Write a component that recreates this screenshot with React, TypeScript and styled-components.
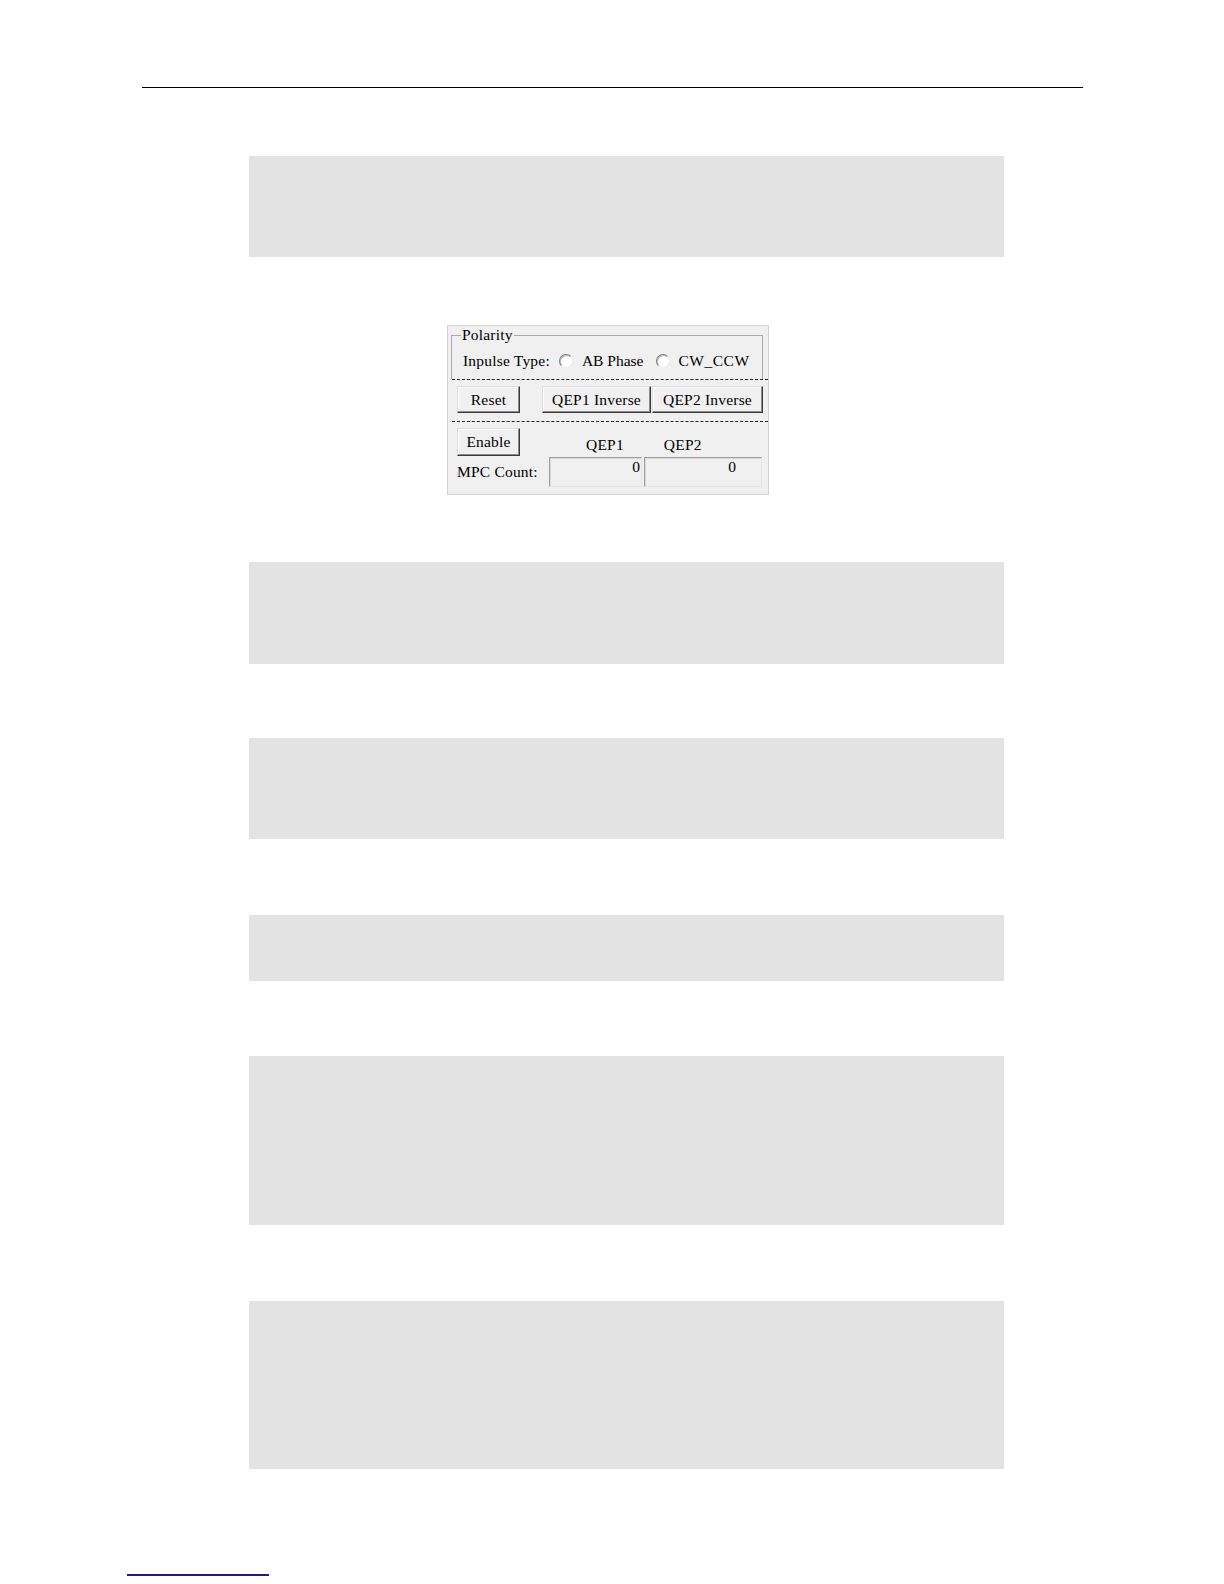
import React from "react";
import styled, { createGlobalStyle } from "styled-components";

const GlobalStyle = createGlobalStyle`
  html, body {
    margin: 0;
    padding: 0;
    background: #ffffff;
  }
  body {
    font-family: "Liberation Serif", "Times New Roman", serif;
    color: #000;
  }
`;

export default function App() {
  return (
    <>
      <GlobalStyle />
      <Page>
        <TopRule />
        <GreyBlock $top={68} $height={101} />

        <Dialog>
          <Group>
            <Legend>Polarity</Legend>
            <Row>
              <Text>Inpulse Type:</Text>
              <Radio $ml={9} />
              <Text $ml={9} $spacing={0}>AB Phase</Text>
              <Radio $ml={13} />
              <Text $ml={8} $spacing={0.5}>CW_CCW</Text>
            </Row>
          </Group>
          <Dashed />
          <ButtonRow $top={6}>
            <Button $w={63} $h={27}>Reset</Button>
            <Button $w={109} $h={27} $ml={22}>QEP1 Inverse</Button>
            <Button $w={111} $h={27} $ml={1}>QEP2 Inverse</Button>
          </ButtonRow>
          <Dashed $top={8} />
          <ButtonRow $top={6}>
            <Button $w={63} $h={28}>Enable</Button>
            <HeadLabel $ml={66}>QEP1</HeadLabel>
            <HeadLabel $ml={40}>QEP2</HeadLabel>
          </ButtonRow>
          <ButtonRow $top={1}>
            <Text $w={92}>MPC Count:</Text>
            <Edit $w={93} $pr={1}>0</Edit>
            <Edit $w={118} $pr={25} $ml={2}>0</Edit>
          </ButtonRow>
        </Dialog>

        <GreyBlock $top={67} $height={102} />
        <GreyBlock $top={74} $height={101} />
        <GreyBlock $top={76} $height={66} />
        <GreyBlock $top={75} $height={169} />
        <GreyBlock $top={76} $height={168} />
        <FootRule />
      </Page>
    </>
  );
}

const Page = styled.div`
  width: 1224px;
  min-height: 1584px;
  padding-top: 87px;
  box-sizing: border-box;
  display: flex;
  flex-direction: column;
  align-items: flex-start;
  background: #fff;
`;

const TopRule = styled.div`
  margin-left: 142px;
  width: 941px;
  height: 1px;
  background: #000;
`;

const GreyBlock = styled.div<{ $top: number; $height: number }>`
  margin-left: 249px;
  margin-top: ${(p) => p.$top}px;
  width: 755px;
  height: ${(p) => p.$height}px;
  background: #e3e3e3;
`;

const FootRule = styled.div`
  margin-left: 127px;
  margin-top: 105px;
  width: 142px;
  height: 2px;
  background: #1c1c8c;
`;

const Dialog = styled.div`
  margin-left: 447px;
  margin-top: 68px;
  width: 322px;
  height: 170px;
  box-sizing: border-box;
  background: #f0f0f0;
  border: 1px solid #d2d2d2;
  display: flex;
  flex-direction: column;
  font-size: 15.5px;
`;

const Group = styled.fieldset`
  margin: 0 5px 0 3px;
  padding: 7px 0 8px 11px;
  border: 1px solid #a9a9a9;
  border-bottom: none;
  min-width: 0;
`;

const Legend = styled.legend`
  padding: 0 1px;
  margin-left: -2px;
  line-height: 18px;
  font-size: 15.5px;
  letter-spacing: 0.2px;
`;

const Row = styled.div`
  display: flex;
  align-items: center;
  height: 20px;
`;

const Text = styled.span<{ $ml?: number; $w?: number; $spacing?: number }>`
  margin-left: ${(p) => p.$ml ?? 0}px;
  ${(p) => (p.$w ? `width: ${p.$w}px; flex: none;` : "")}
  letter-spacing: ${(p) => p.$spacing ?? 0.2}px;
  line-height: 20px;
  white-space: nowrap;
`;

const Radio = styled.span<{ $ml?: number }>`
  margin-left: ${(p) => p.$ml ?? 0}px;
  width: 14px;
  height: 14px;
  box-sizing: border-box;
  flex: none;
  border-radius: 50%;
  background: #fff;
  border: 1px solid;
  border-color: #7c7c7c #ececec #ececec #7c7c7c;
  box-shadow: inset 1px 1px 0 #bdbdbd;
`;

const Dashed = styled.div<{ $top?: number }>`
  margin-top: ${(p) => p.$top ?? 0}px;
  margin-left: 4px;
  height: 0;
  border-top: 1px dashed #222;
`;

const ButtonRow = styled.div<{ $top: number }>`
  margin-top: ${(p) => p.$top}px;
  padding-left: 9px;
  display: flex;
  align-items: center;
`;

const Button = styled.button<{ $w: number; $h: number; $ml?: number }>`
  margin: 0 0 0 ${(p) => p.$ml ?? 0}px;
  padding: 0;
  width: ${(p) => p.$w}px;
  height: ${(p) => p.$h}px;
  flex: none;
  box-sizing: border-box;
  font-family: "Liberation Serif", "Times New Roman", serif;
  font-size: 15.5px;
  letter-spacing: 0.2px;
  color: #000;
  background: #f0f0f0;
  border: 1px solid;
  border-color: #dcdcdc #3a3a3a #3a3a3a #dcdcdc;
  box-shadow: inset -1px -1px 0 #8c8c8c, inset 1px 1px 0 #ffffff;
  border-radius: 0;
`;

const HeadLabel = styled.span<{ $ml: number }>`
  margin-left: ${(p) => p.$ml}px;
  margin-top: 5px;
  line-height: 20px;
  letter-spacing: 0.2px;
`;

const Edit = styled.div<{ $w: number; $pr: number; $ml?: number }>`
  margin-left: ${(p) => p.$ml ?? 0}px;
  width: ${(p) => p.$w}px;
  height: 30px;
  flex: none;
  box-sizing: border-box;
  padding-right: ${(p) => p.$pr}px;
  text-align: right;
  line-height: 17px;
  background: #f0f0f0;
  border: 1px solid;
  border-color: #a0a0a0 #e4e4e4 #e4e4e4 #a0a0a0;
  box-shadow: inset 1px 1px 0 #d8d8d8;
`;
